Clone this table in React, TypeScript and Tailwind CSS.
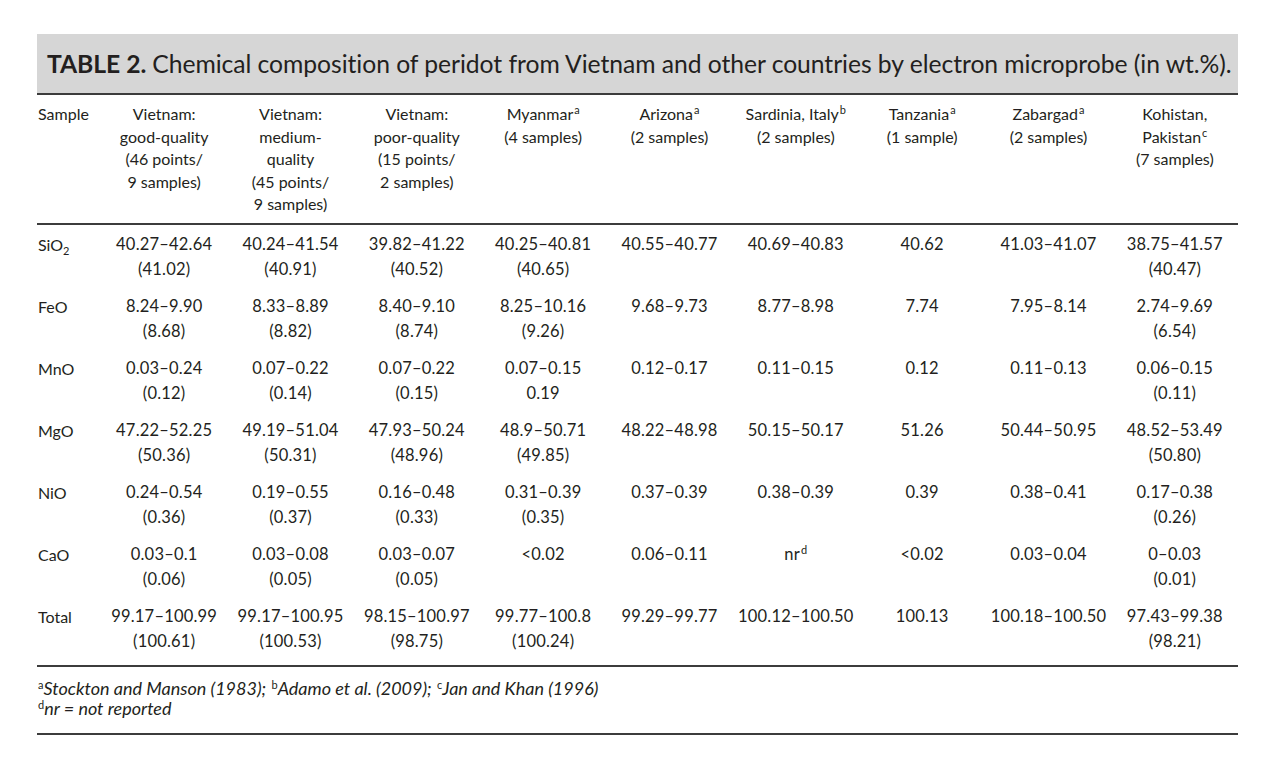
const columns = [
  ["Vietnam:", "good-quality", "(46 points/", "9 samples)"],
  ["Vietnam:", "medium-", "quality", "(45 points/", "9 samples)"],
  ["Vietnam:", "poor-quality", "(15 points/", "2 samples)"],
  [["Myanmar", "a"], "(4 samples)"],
  [["Arizona", "a"], "(2 samples)"],
  [["Sardinia, Italy", "b"], "(2 samples)"],
  [["Tanzania", "a"], "(1 sample)"],
  [["Zabargad", "a"], "(2 samples)"],
  ["Kohistan,", ["Pakistan", "c"], "(7 samples)"],
] as (string | [string, string])[][];

type Cell = string | string[];

const rows: { label: React.ReactNode; cells: Cell[] }[] = [
  {
    label: (
      <>
        SiO<sub className="text-[11px] top-[4px]">2</sub>
      </>
    ),
    cells: [
      ["40.27–42.64", "(41.02)"],
      ["40.24–41.54", "(40.91)"],
      ["39.82–41.22", "(40.52)"],
      ["40.25–40.81", "(40.65)"],
      "40.55–40.77",
      "40.69–40.83",
      "40.62",
      "41.03–41.07",
      ["38.75–41.57", "(40.47)"],
    ],
  },
  {
    label: "FeO",
    cells: [
      ["8.24–9.90", "(8.68)"],
      ["8.33–8.89", "(8.82)"],
      ["8.40–9.10", "(8.74)"],
      ["8.25–10.16", "(9.26)"],
      "9.68–9.73",
      "8.77–8.98",
      "7.74",
      "7.95–8.14",
      ["2.74–9.69", "(6.54)"],
    ],
  },
  {
    label: "MnO",
    cells: [
      ["0.03–0.24", "(0.12)"],
      ["0.07–0.22", "(0.14)"],
      ["0.07–0.22", "(0.15)"],
      ["0.07–0.15", "0.19"],
      "0.12–0.17",
      "0.11–0.15",
      "0.12",
      "0.11–0.13",
      ["0.06–0.15", "(0.11)"],
    ],
  },
  {
    label: "MgO",
    cells: [
      ["47.22–52.25", "(50.36)"],
      ["49.19–51.04", "(50.31)"],
      ["47.93–50.24", "(48.96)"],
      ["48.9–50.71", "(49.85)"],
      "48.22–48.98",
      "50.15–50.17",
      "51.26",
      "50.44–50.95",
      ["48.52–53.49", "(50.80)"],
    ],
  },
  {
    label: "NiO",
    cells: [
      ["0.24–0.54", "(0.36)"],
      ["0.19–0.55", "(0.37)"],
      ["0.16–0.48", "(0.33)"],
      ["0.31–0.39", "(0.35)"],
      "0.37–0.39",
      "0.38–0.39",
      "0.39",
      "0.38–0.41",
      ["0.17–0.38", "(0.26)"],
    ],
  },
  {
    label: "CaO",
    cells: [
      ["0.03–0.1", "(0.06)"],
      ["0.03–0.08", "(0.05)"],
      ["0.03–0.07", "(0.05)"],
      "<0.02",
      "0.06–0.11",
      "nr^d",
      "<0.02",
      "0.03–0.04",
      ["0–0.03", "(0.01)"],
    ],
  },
  {
    label: "Total",
    cells: [
      ["99.17–100.99", "(100.61)"],
      ["99.17–100.95", "(100.53)"],
      ["98.15–100.97", "(98.75)"],
      ["99.77–100.8", "(100.24)"],
      "99.29–99.77",
      "100.12–100.50",
      "100.13",
      "100.18–100.50",
      ["97.43–99.38", "(98.21)"],
    ],
  },
];

// preflight gives sup position:relative, top:-0.25em, so only nudge it
function Sup({ children }: { children: React.ReactNode }) {
  return <sup className="text-[11px] -top-[6px] ml-[1px] not-italic">{children}</sup>;
}

function HeadLine({ line }: { line: string | [string, string] }) {
  if (typeof line === "string") return <div>{line}</div>;
  return (
    <div>
      {line[0]}
      <Sup>{line[1]}</Sup>
    </div>
  );
}

function DataCell({ cell }: { cell: Cell }) {
  const lines = typeof cell === "string" ? [cell] : cell;
  return (
    <div className="text-center">
      {lines.map((l, i) =>
        l === "nr^d" ? (
          <div key={i}>
            nr<Sup>d</Sup>
          </div>
        ) : (
          <div key={i}>{l}</div>
        )
      )}
    </div>
  );
}

export default function App() {
  return (
    <div
      className="w-[1280px] h-[774px] bg-white text-[#231f20] pt-[34px] px-[37px]"
      style={{ fontFamily: "Lato, 'Open Sans', sans-serif" }}
    >
      <div className="w-[1201px]">
        <div className="bg-[#d6d6d6] h-[61px] border-b-2 border-[#3c3c3c] flex items-center pl-[10px] text-[24.7px] tracking-[-0.05px]">
          <span className="font-bold">TABLE 2.</span>
          <span className="ml-[6px]">
            Chemical composition of peridot from Vietnam and other countries by electron microprobe (in wt.%).
          </span>
        </div>

        <div className="grid grid-cols-[64px_repeat(9,1fr)] text-[16px] leading-[22.5px] pt-[8px] pb-[7px] border-b-2 border-[#3c3c3c]">
          <div className="pl-[1px]">Sample</div>
          {columns.map((col, i) => (
            <div key={i} className="text-center">
              {col.map((line, j) => (
                <HeadLine key={j} line={line} />
              ))}
            </div>
          ))}
        </div>

        <div className="flex flex-col gap-[11px] pt-[7px] pb-[10px] border-b-2 border-[#3c3c3c] text-[16.5px] leading-[25.5px] tracking-[0.2px]">
          {rows.map((row, i) => (
            <div key={i} className="grid grid-cols-[64px_repeat(9,1fr)]">
              <div className="pl-[1px] tracking-normal text-[16px]">{row.label}</div>
              {row.cells.map((c, j) => (
                <DataCell key={j} cell={c} />
              ))}
            </div>
          ))}
        </div>

        <div className="italic text-[18px] leading-[20px] pt-[11px] pb-[15px] border-b-2 border-[#3c3c3c]">
          <div>
            <Sup>a</Sup>Stockton and Manson (1983); <Sup>b</Sup>Adamo et al. (2009); <Sup>c</Sup>Jan and Khan (1996)
          </div>
          <div>
            <Sup>d</Sup>nr = not reported
          </div>
        </div>
      </div>
    </div>
  );
}
